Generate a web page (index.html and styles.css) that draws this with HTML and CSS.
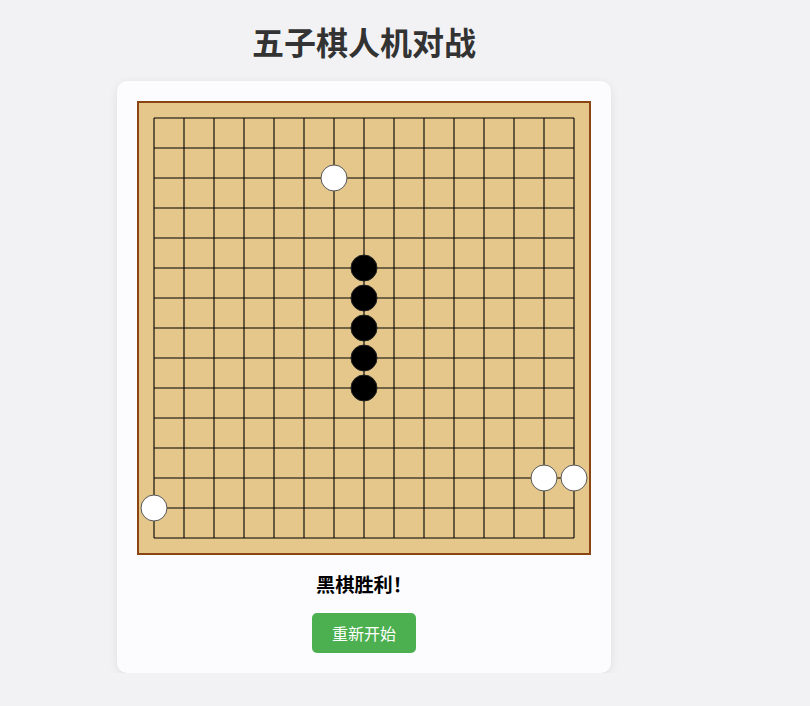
FILE: index.html
```html
<!DOCTYPE html>
<html>
<head>
<meta charset="utf-8">
<meta name="viewport" content="width=device-width, initial-scale=1">
<title>五子棋人机对战</title>
<link rel="stylesheet" href="styles.css">
</head>
<body>

<div class="game">
  <h1 class="title">五子棋人机对战</h1>

  <div class="card">
    <div class="board">
      <svg width="450" height="450" viewBox="0 0 450 450">
        <path class="grid" d="M15 15H435M15 45H435M15 75H435M15 105H435M15 135H435M15 165H435M15 195H435M15 225H435M15 255H435M15 285H435M15 315H435M15 345H435M15 375H435M15 405H435M15 435H435
          M15 15V435M45 15V435M75 15V435M105 15V435M135 15V435M165 15V435M195 15V435M225 15V435M255 15V435M285 15V435M315 15V435M345 15V435M375 15V435M405 15V435M435 15V435"/>
        <!-- black -->
        <circle class="stone black" cx="225" cy="165" r="13"/>
        <circle class="stone black" cx="225" cy="195" r="13"/>
        <circle class="stone black" cx="225" cy="225" r="13"/>
        <circle class="stone black" cx="225" cy="255" r="13"/>
        <circle class="stone black" cx="225" cy="285" r="13"/>
        <!-- white -->
        <circle class="stone white" cx="195" cy="75" r="13"/>
        <circle class="stone white" cx="405" cy="375" r="13"/>
        <circle class="stone white" cx="435" cy="375" r="13"/>
        <circle class="stone white" cx="15" cy="405" r="13"/>
      </svg>
    </div>

    <div class="status">黑棋胜利！</div>
    <button type="button" class="btn-restart">重新开始</button>
  </div>
</div>

</body>
</html>
```

FILE: styles.css
```css
* {box-sizing: border-box;}

body {
  margin: 0;
  background-color: #f2f2f4;
  font-family: "Noto Sans CJK SC", "Noto Sans", sans-serif;
}

.game {
  width: 494px;
  margin-left: 117px;
  padding-top: 18px;
}

.title {
  margin: 0 0 17px 0;
  font-size: 32px;
  line-height: 46px;
  font-weight: bold;
  color: #333;
  text-align: center;
}

.card {
  background-color: #fcfcff;
  border-radius: 10px;
  padding: 20px;
  box-shadow: 0 2px 10px rgba(0, 0, 0, 0.08);
  display: flex;
  flex-direction: column;
  align-items: center;
}

.board {
  width: 454px;
  height: 454px;
  border: 2px solid #8b4513;
  background-color: #e6c78b;
}

.board svg {display: block;}

.grid {
  stroke: #000;
  stroke-width: 1.1;
  fill: none;
}

.stone.black {
  fill: #000;
  stroke: #222;
  stroke-width: 1;
}

.stone.white {
  fill: #fff;
  stroke: #555;
  stroke-width: 1;
}

.status {
  margin-top: 16px;
  font-size: 19.2px;
  line-height: 27px;
  font-weight: bold;
  color: #000;
}

.btn-restart {
  margin-top: 15px;
  height: 40px;
  padding: 0 20px;
  border: none;
  border-radius: 5px;
  background-color: #4caf50;
  color: white;
  font-family: inherit;
  font-size: 16px;
  cursor: pointer;
}
```
